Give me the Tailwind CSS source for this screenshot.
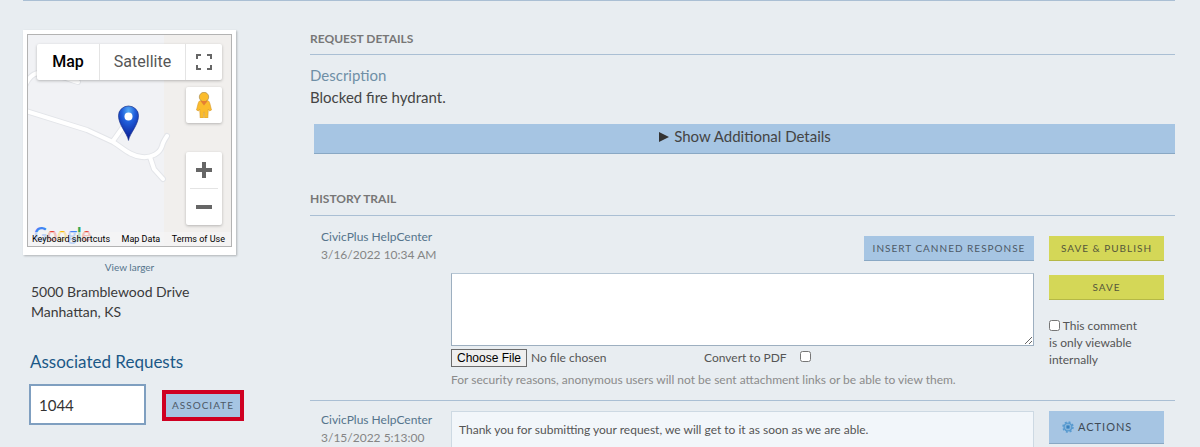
<!DOCTYPE html>
<html lang="en">
<head>
  <meta charset="UTF-8">
  <meta name="viewport" content="width=device-width, initial-scale=1.0">
  <title>Request Details</title>
  <script src="https://cdn.jsdelivr.net/npm/@tailwindcss/browser@4"></script>
</head>
<body class="h-screen overflow-hidden bg-[#e8edf1] font-['Lato',sans-serif] text-[#444]">
  <div class="ml-[23px] mr-[25px] flex items-start border-t border-[#aabfd4]">

    <!-- Location -->
    <aside class="mt-[29px] w-[287px] shrink-0">
      <div class="w-[213px] bg-white px-1 pt-1 pb-2 shadow-[1px_1px_2px_rgba(0,0,0,0.25)]">
        <div class="relative h-[213px] overflow-hidden border border-[#b3b3b3] bg-[#f1f2f5] font-['Roboto',sans-serif]">
          <svg class="absolute inset-0" width="203" height="212" viewBox="0 0 203 212" fill="none" stroke-linecap="round" stroke-linejoin="round">
            <rect x="136" width="67" height="212" fill="#f1efed"/>
            <g stroke="#e3e5e9" stroke-width="6">
              <path d="M-2 49C1 42 5 39 10 38C24 37 37 43 50 47"/>
              <path d="M-2 76L59 95L85 107C95 113 102 121 114 122C124 123 132 118 134 111C135 107 137 104 139 101"/>
              <path d="M85 106L95 92L101 84"/>
              <path d="M122 122L126 134L135 144"/>
            </g>
            <g stroke="#fff" stroke-width="4">
              <path d="M-2 49C1 42 5 39 10 38C24 37 37 43 50 47"/>
              <path d="M-2 76L59 95L85 107C95 113 102 121 114 122C124 123 132 118 134 111C135 107 137 104 139 101"/>
              <path d="M85 106L95 92L101 84"/>
              <path d="M122 122L126 134L135 144"/>
            </g>
            <!-- marker -->
            <defs>
              <radialGradient id="pin" cx="0.5" cy="0.15" r="0.8">
                <stop offset="0" stop-color="#58aef5"/>
                <stop offset="0.4" stop-color="#2160dc"/>
                <stop offset="1" stop-color="#0b1d94"/>
              </radialGradient>
            </defs>
            <path d="M100.500 105C99 98 90.500 90 90.500 80.500A10 9.500 0 0 1 110.500 80.500C110.500 90 102 98 100.500 105Z" fill="url(#pin)" stroke="#17308c" stroke-width="0.700"/>
            <circle cx="100.500" cy="81.500" r="4" fill="#fff"/>
          </svg>

          <div class="absolute top-[9px] left-[9px] flex h-9 bg-white rounded-xs shadow-[0_1px_3px_rgba(0,0,0,0.25)]">
            <button class="w-[62px] text-base font-medium text-black">Map</button>
            <button class="w-[87px] border-x border-[#e4e4e4] text-base text-[#565656]">Satellite</button>
            <button class="flex w-9 items-center justify-center" aria-label="Full screen">
              <svg width="16" height="16" viewBox="0 0 16 16" fill="none" stroke="#666" stroke-width="2"><path d="M1 5V1H5M11 1H15V5M15 11V15H11M5 15H1V11"/></svg>
            </button>
          </div>

          <button class="absolute top-[52px] left-[158px] flex size-9 items-center justify-center rounded-xs bg-white shadow-[0_1px_3px_rgba(0,0,0,0.25)]" aria-label="Street View">
            <svg width="16" height="26" viewBox="0 0 16 26">
              <path d="M4.500 8.500H11.500C13 9 13.500 10 14 12L15.500 18L13.500 19L12.300 17L11.800 26H8.600L8.300 20H7.700L7.400 26H4.200L3.700 17L2.500 19L0.500 18L2 12C2.500 10 3 9 4.500 8.500Z" fill="#fbbc2c" stroke="#d99b29" stroke-width="0.600"/>
              <circle cx="8" cy="5" r="4.700" fill="#fbbc2c" stroke="#a98d50" stroke-width="0.700"/>
              <path d="M4.500 9H11.500L8 13.500Z" fill="#e58033"/>
            </svg>
          </button>

          <div class="absolute top-[117px] left-[158px] flex w-9 flex-col rounded-xs bg-white shadow-[0_1px_3px_rgba(0,0,0,0.25)]">
            <button class="flex h-9 items-center justify-center" aria-label="Zoom in">
              <svg width="16" height="16" viewBox="0 0 16 16" stroke="#666" stroke-width="4"><path d="M8 0V16M0 8H16"/></svg>
            </button>
            <span class="mx-1 h-px bg-[#e4e4e4]"></span>
            <button class="flex h-9 items-center justify-center" aria-label="Zoom out">
              <svg width="16" height="16" viewBox="0 0 16 16" stroke="#666" stroke-width="4"><path d="M0 8H16"/></svg>
            </button>
          </div>

          <div class="absolute bottom-0 left-[6px] text-[18px] leading-6 font-['Lato',sans-serif] font-bold"><span class="text-[#4285f4]">G</span><span class="text-[#ea4335]">o</span><span class="text-[#fbbc05]">o</span><span class="text-[#4285f4]">g</span><span class="text-[#34a853]">l</span><span class="text-[#ea4335]">e</span></div>
          <div class="absolute inset-x-0 bottom-0 flex h-[14px] items-end justify-between bg-[#f5f5f5]/70 pr-[6px] pl-1 text-[9px] leading-[13px] text-black">
            <button>Keyboard shortcuts</button>
            <button>Map Data</button>
            <a href="#">Terms of Use</a>
          </div>
        </div>
      </div>
      <a href="#" class="mt-1 block w-[213px] text-center text-[10px] leading-4 text-[#55748c]">View larger</a>
      <address class="mt-[7px] ml-2 text-sm leading-5 text-[#3a3a3a] not-italic">5000 Bramblewood Drive<br>Manhattan, KS</address>

      <h2 class="mt-[30px] ml-[7px] text-[17px] leading-5 text-[#1b5887]"><label for="assoc">Associated Requests</label></h2>
      <div class="mt-3 ml-[6px] flex items-end gap-4">
        <input id="assoc" type="text" value="1044" class="h-[41px] w-[117px] border-2 border-[#7f9fc0] bg-white px-2 text-[15px] text-[#333]">
        <button class="mb-1 h-[31px] w-[82px] border-4 border-[#cf0022] bg-[#a6c5e3] text-[10px] tracking-[1px] text-[#4d5966]">ASSOCIATE</button>
      </div>
    </aside>

    <main class="min-w-0 flex-1 pt-7">
      <h2 class="border-b border-[#aabfd4] pb-[5px] text-xs leading-5 font-bold text-[#777]">REQUEST DETAILS</h2>
      <h3 class="mt-[9px] text-[15px] leading-[22px] text-[#6f8fa6]">Description</h3>
      <p class="text-[15px] leading-[22px]">Blocked fire hydrant.</p>
      <button class="mt-4 ml-1 flex h-[30px] w-[calc(100%-4px)] items-start justify-center gap-1 border-b border-[#89a8c4] bg-[#a6c5e3] pt-px text-[15px] leading-[22px]">
        <svg class="mt-[7px]" width="12" height="10" viewBox="0 0 12 10"><path d="M1 0L11 5L1 10Z" fill="#333"/></svg>
        Show Additional Details
      </button>

      <h2 class="mt-[35px] border-b border-[#aabfd4] pb-[6px] text-xs leading-5 font-bold text-[#777]">HISTORY TRAIL</h2>

      <!-- New comment -->
      <section class="flex border-b border-[#aabfd4] pr-[11px] pb-[11px] pl-[11px]">
        <div class="w-[130px] shrink-0 pt-3 text-xs leading-[18px] text-[#858585]">
          <p class="text-[#55748c]">CivicPlus HelpCenter</p>
          <p>3/16/2022 10:34 AM</p>
        </div>
        <form class="min-w-0 flex-1 pt-5">
          <button type="button" class="ml-auto block h-[25px] w-[170px] border-b border-[#89a8c4] bg-[#a6c5e3] text-[10px] tracking-[1px] text-[#4d5966]">INSERT CANNED RESPONSE</button>
          <textarea aria-label="Comment" class="mt-3 block h-[73px] w-full border border-[#9dafc0] border-t-[#b6c6d4] bg-white"></textarea>
          <div class="mt-[3px] flex h-[18px] items-center text-xs text-[#555]">
            <input type="file" aria-label="Attachment" class="w-[253px] leading-4 file:mr-1 file:h-[18px] file:w-[76px] file:border file:border-solid file:border-[#6b6b6b] file:bg-[#efefef] file:p-0 file:font-['Liberation_Sans',sans-serif] file:text-xs file:leading-4 file:text-black">
            <label for="pdf">Convert to PDF</label>
            <input id="pdf" type="checkbox" class="mt-[2px] mr-[223px] ml-auto size-[11px] self-start">
          </div>
          <p class="mt-1 text-xs leading-[18px] text-[#8b8b8b]">For security reasons, anonymous users will not be sent attachment links or be able to view them.</p>
        </form>
        <div class="ml-[15px] w-[115px] shrink-0 pt-5 text-[10px] text-[#54563b]">
          <button class="block h-[25px] w-full border-b border-[#b5b846] bg-[#d4d757] tracking-[1px]">SAVE &amp; PUBLISH</button>
          <button class="mt-[14px] block h-[25px] w-full border-b border-[#b5b846] bg-[#d4d757] tracking-[1px]">SAVE</button>
          <label class="mt-[17px] block w-[95px] text-xs leading-[17px] text-[#555]"><input type="checkbox" class="size-[11px] align-[-1px]"> This comment is only viewable internally</label>
        </div>
      </section>

      <!-- Earlier entry -->
      <section class="flex px-[11px] pt-[10px]">
        <div class="w-[130px] shrink-0 text-xs leading-[18px] text-[#858585]">
          <p class="text-[#55748c]">CivicPlus HelpCenter</p>
          <p>3/15/2022 5:13:00</p>
        </div>
        <div class="min-w-0 flex-1 border border-[#cdd9e3] bg-[#f2f6fa] px-[7px] py-[9px] text-xs leading-[18px] text-[#555]">Thank you for submitting your request, we will get to it as soon as we are able.</div>
        <button class="ml-[15px] flex h-[33px] w-[115px] shrink-0 items-center gap-1 border-b border-[#89a8c4] bg-[#a6c5e3] pl-[13px] text-[11px] tracking-[1px] text-[#3f4a55]">
          <svg width="12" height="12" viewBox="0 0 12 12"><circle cx="6" cy="6" r="4.600" fill="#599bd0"/><circle cx="6" cy="6" r="5" fill="none" stroke="#599bd0" stroke-width="1.500" stroke-dasharray="2 1.930"/><circle cx="6" cy="6" r="2.800" fill="none" stroke="#a6c5e3" stroke-width="0.700"/><circle cx="6" cy="6" r="1.300" fill="#3b80bb"/></svg>
          ACTIONS
        </button>
      </section>
    </main>
  </div>
</body>
</html>
